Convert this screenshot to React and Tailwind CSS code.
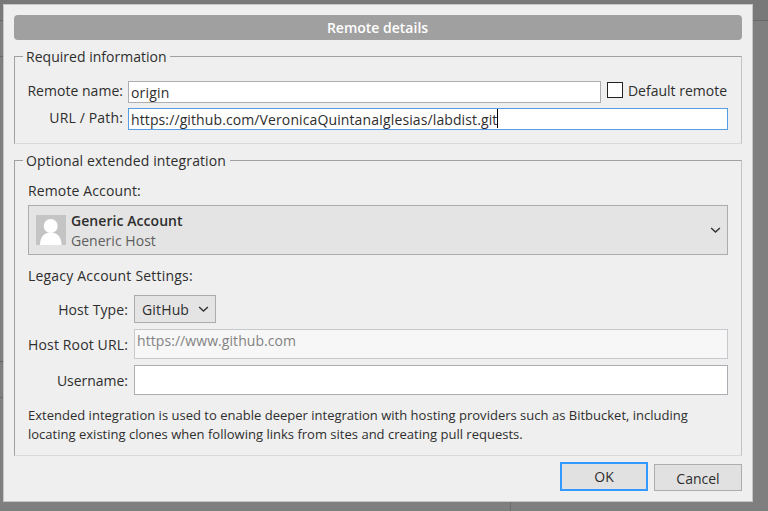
const FIELDSET =
  "min-w-0 border border-t-[#a0a0a0] border-l-[#a0a0a0] border-r-[#c3c3c3] border-b-[#dadada] px-[13px]";

function Chevron() {
  return (
    <svg width="11" height="7" viewBox="0 0 11 7" fill="none" stroke="#333" strokeWidth="1.4">
      <path d="M1.1 1.1 5.5 5.1 9.9 1.1" />
    </svg>
  );
}

function Avatar() {
  return (
    <svg width="30" height="30" viewBox="0 0 30 30" className="mt-[2px] shrink-0">
      <rect width="30" height="30" fill="#c4c4c4" />
      <circle cx="14.7" cy="11" r="7" fill="#fff" />
      <path d="M4 30C4 21.5 8.5 17.5 14.7 17.5S25.5 21.5 25.5 30Z" fill="#fff" />
    </svg>
  );
}

function Backdrop({ className, lines }) {
  return (
    <div className={className}>
      <div className="h-4 bg-[#797979]" />
      {lines}
    </div>
  );
}

export default function App() {
  return (
    <div className="flex h-[511px] w-[768px] flex-col overflow-hidden bg-[#7f7f7f] font-['Open_Sans','Segoe_UI',sans-serif] text-[14px] leading-[19px] whitespace-nowrap text-[#2e2e2e]">
      <div className="h-1 shrink-0 bg-[#797979]" />
      <div className="flex h-[498px] shrink-0">
        <Backdrop
          className="w-[3px] shrink-0"
          lines={
            <>
              <div className="h-px bg-[#696969]" />
              <div className="mt-[35px] h-px bg-[#696969]" />
              <div className="mt-[304px] h-px bg-[#606060]" />
              <div className="mt-[35px] h-px bg-[#696969]" />
            </>
          }
        />

        <div className="flex w-[750px] shrink-0 flex-col border border-[#c6c6c6] bg-[#efefef] px-[10px] pt-[10px]">
          <div className="h-[25px] shrink-0 rounded-[4px] bg-[#a0a0a0] pt-[3px] pr-px text-center font-semibold text-white">
            Remote details
          </div>

          <fieldset className={`${FIELDSET} mt-[7px] h-[97px] pt-[15px]`}>
            <legend className="-ml-[5px] w-[147px] pl-[3px] tracking-[0.02px]">Required information</legend>
            <div className="flex h-[22px]">
              <div className="mr-[5px] flex w-[95px] shrink-0 justify-end tracking-[0.03px]">Remote name:</div>
              <div className="flex-1 border border-[#abadb3] bg-white pt-px pl-[2px] tracking-[0.2px]">origin</div>
              <div className="mt-px ml-[6px] size-4 border border-[#222] bg-white" />
              <div className="flex w-[105px] justify-end pr-px">Default remote</div>
            </div>
            <div className="mt-[5px] flex h-[22px]">
              <div className="mr-[5px] flex w-[95px] shrink-0 justify-end tracking-[0.15px]">URL / Path:</div>
              <div className="flex flex-1 border border-[#569de5] bg-white pl-[2px]">
                <div className="w-[366px] pt-px tracking-[0.11px]">
                  https://github.com/VeronicaQuintanaIglesias/labdist.git
                </div>
                <div className="h-[19px] w-px bg-black" />
              </div>
            </div>
          </fieldset>

          <fieldset className={`${FIELDSET} mt-[7px] h-[305px] pt-[11px]`}>
            <legend className="-ml-[5px] w-[207px] pl-[3px] tracking-[0.11px]">Optional extended integration</legend>
            <div className="tracking-[0.13px]">Remote Account:</div>
            <div className="mt-[5px] flex h-[50px] items-start border border-[#acacac] bg-[#e4e4e4] pt-[7px] pr-[6px] pl-[7px]">
              <Avatar />
              <div className="-mt-[2px] ml-[5px] flex-1">
                <div className="font-semibold tracking-[0.06px]">Generic Account</div>
                <div className="mt-px tracking-[0.03px] text-[#5e5e5e]">Generic Host</div>
              </div>
              <div className="mt-[14px]">
                <Chevron />
              </div>
            </div>

            <div className="mt-[11px] tracking-[0.2px]">Legacy Account Settings:</div>
            <div className="mt-[10px] flex h-7">
              <div className="mr-[6px] flex w-[100px] shrink-0 justify-end pt-[5px] tracking-[0.1px]">Host Type:</div>
              <div className="flex w-[82px] justify-between border border-[#acacac] bg-[#e4e4e4] pt-1 pr-[6px] pl-[7px]">
                <span className="tracking-[0.15px]">GitHub</span>
                <div className="mt-[6px]">
                  <Chevron />
                </div>
              </div>
            </div>
            <div className="mt-[6px] flex h-[30px]">
              <div className="mr-[6px] flex w-[100px] shrink-0 justify-end pt-[6px] tracking-[0.14px]">Host Root URL:</div>
              <div className="flex-1 border border-[#c8c9cd] bg-[#f7f7f7] pt-px pl-[2px] tracking-[0.07px] text-[#838383]">
                https://www.github.com
              </div>
            </div>
            <div className="mt-[6px] flex h-[30px]">
              <div className="mr-[6px] flex w-[100px] shrink-0 justify-end pt-[6px] tracking-[-0.03px]">Username:</div>
              <div className="flex-1 border border-[#abadb3] bg-white" />
            </div>

            <p className="mt-[11px] text-[13px] tracking-[0.01px]">
              Extended integration is used to enable deeper integration with hosting providers such as Bitbucket, including
              <br />
              locating existing clones when following links from sites and creating pull requests.
            </p>
          </fieldset>

          <div className="mt-[6px] flex items-end justify-end gap-[6px] font-medium">
            <div className="h-[29px] w-[88px] border-2 border-[#3399ff] bg-[#e1e1e1] pt-[3px] text-center">OK</div>
            <div className="h-[27px] w-[88px] border border-[#adadad] bg-[#e1e1e1] pt-1 text-center">Cancel</div>
          </div>
        </div>

        <Backdrop className="flex-1" lines={<div className="h-px bg-[#696969]" />} />
      </div>
      <div className="ml-[510px] w-px flex-1 bg-[#6c6c6c]" />
    </div>
  );
}
